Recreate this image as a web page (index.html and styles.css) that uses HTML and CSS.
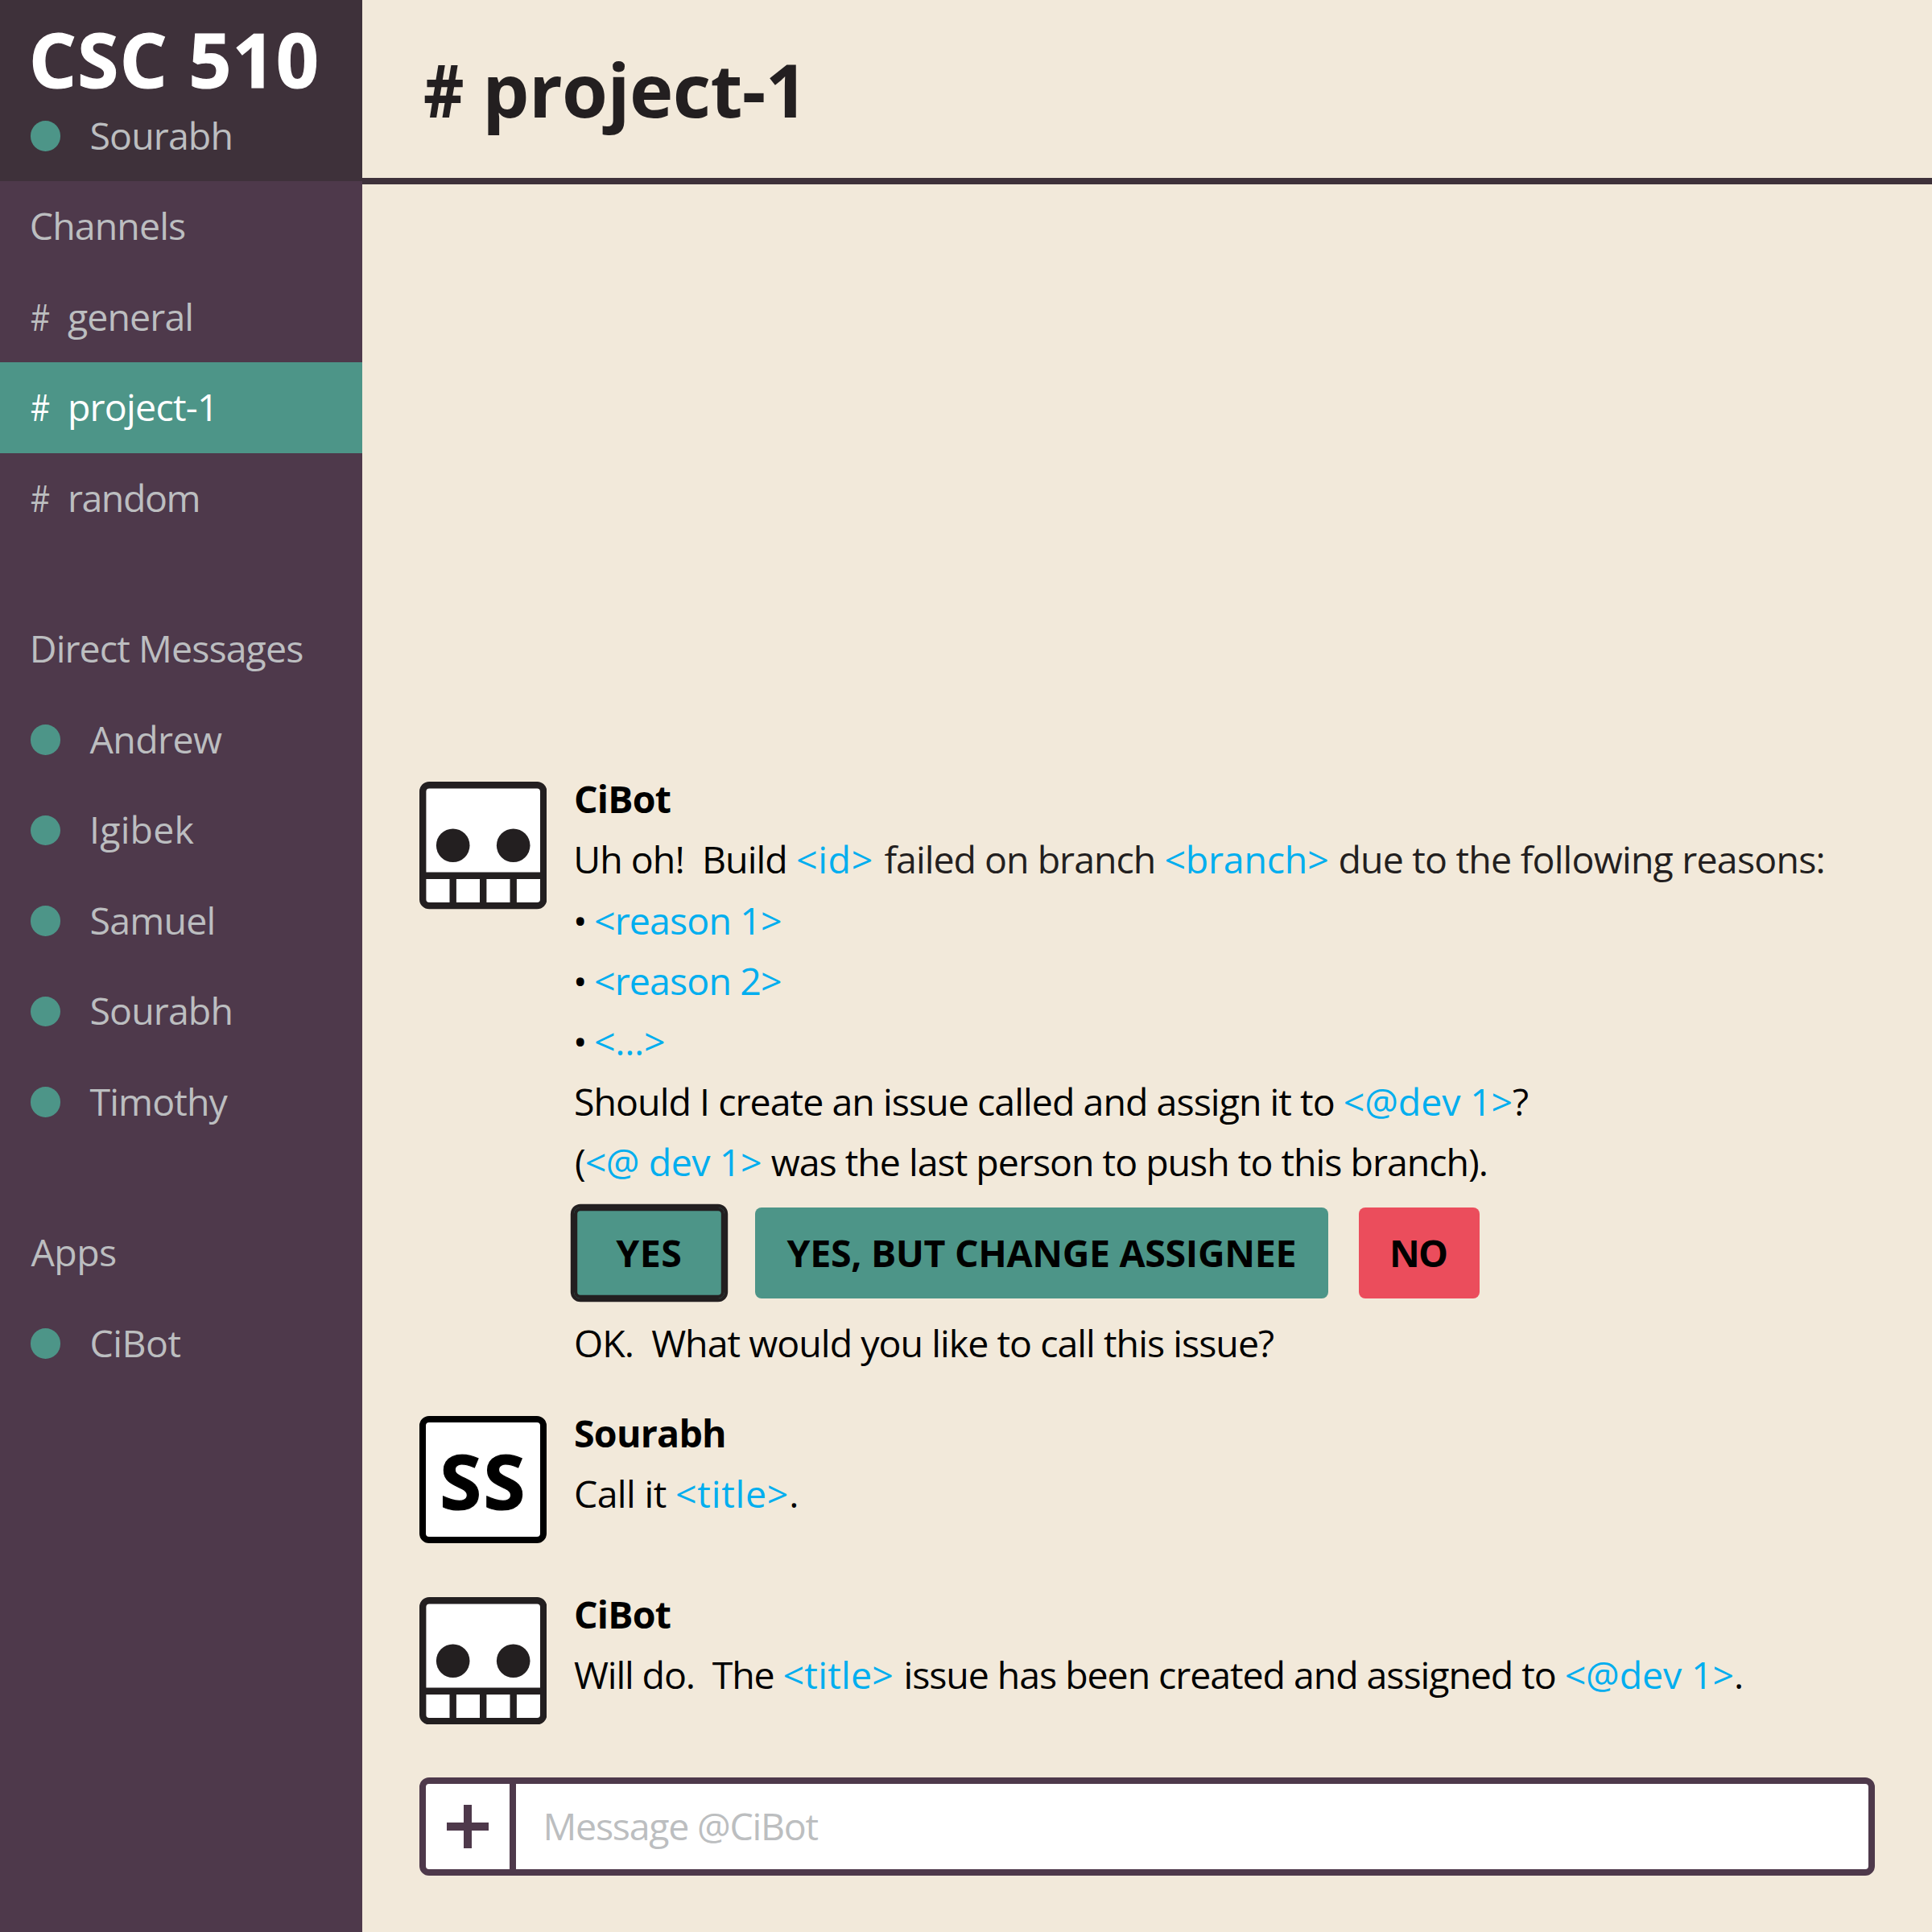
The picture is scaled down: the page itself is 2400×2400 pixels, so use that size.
FILE: index.html
```html
<!DOCTYPE html>
<html lang="en">
<head>
<meta charset="utf-8">
<title>CSC 510 – project-1</title>
<link rel="stylesheet" href="styles.css">
</head>
<body>
<svg width="0" height="0" class="defs">
  <symbol id="bot" viewBox="0 0 158.4 158.4">
    <rect x="4.2" y="4.2" width="150" height="150" rx="8" fill="#fff" stroke="#231f20" stroke-width="8.4"/>
    <circle cx="41.7" cy="79.2" r="20.8" fill="#231f20"/>
    <circle cx="116.7" cy="79.2" r="20.8" fill="#231f20"/>
    <path d="M4.2 116.7h150M41.7 116.7v37.5M79.2 116.7v37.5M116.7 116.7v37.5" fill="none" stroke="#231f20" stroke-width="8.4"/>
  </symbol>
</svg>
<div class="app">
  <aside class="sidebar">
    <header class="workspace">
      <h1 class="workspace-name">CSC 510</h1>
      <div class="row person"><i class="dot"></i><span>Sourabh</span></div>
    </header>
    <nav class="group">
      <div class="row heading channels">Channels</div>
      <div class="row channel"><span class="hash">#</span><span>general</span></div>
      <div class="row channel active"><span class="hash">#</span><span class="sp-project">project-1</span></div>
      <div class="row channel"><span class="hash">#</span><span class="sp-random">random</span></div>
    </nav>
    <nav class="group">
      <div class="row heading">Direct Messages</div>
      <div class="row person"><i class="dot"></i><span class="sp-andrew">Andrew</span></div>
      <div class="row person"><i class="dot"></i><span class="sp-igibek">Igibek</span></div>
      <div class="row person"><i class="dot"></i><span class="sp-samuel">Samuel</span></div>
      <div class="row person"><i class="dot"></i><span>Sourabh</span></div>
      <div class="row person"><i class="dot"></i><span>Timothy</span></div>
    </nav>
    <nav class="group">
      <div class="row heading apps">Apps</div>
      <div class="row person"><i class="dot"></i><span class="sp-cibot">CiBot</span></div>
    </nav>
  </aside>
  <main class="main">
    <header class="topbar"><span class="title-hash">#</span><span class="title">project-1</span></header>
    <section class="feed">
      <article class="message">
        <svg class="avatar"><use href="#bot"/></svg>
        <div class="body">
          <div class="line author">CiBot</div>
          <div class="line build">Uh oh!  Build <b class="var v-id">&lt;id&gt;</b><span class="soft gap"> </span><span class="soft">failed on branch </span><b class="var v-branch">&lt;branch&gt; </b><span class="soft due">due to the following reasons:</span></div>
          <div class="reasons">
            <div class="line"><span class="bullet">• </span><b class="var v-reason">&lt;reason 1&gt;</b></div>
            <div class="line"><span class="bullet">• </span><b class="var v-reason">&lt;reason 2&gt;</b></div>
            <div class="line"><span class="bullet">• </span><b class="var v-more">&lt;...&gt;</b></div>
          </div>
          <div class="line should">Should I create an issue called and assign it to <b class="var v-dev">&lt;@dev 1&gt;</b>?</div>
          <div class="line last">(<b class="var v-at">&lt;@ dev 1&gt; </b>was the last person to push to this branch).</div>
          <div class="actions">
            <button class="btn yes selected">YES</button>
            <button class="btn change">YES, BUT CHANGE ASSIGNEE</button>
            <button class="btn no">NO</button>
          </div>
          <div class="line ok">OK.  What would you like to call this issue?</div>
        </div>
      </article>
      <article class="message">
        <div class="avatar initials">SS</div>
        <div class="body">
          <div class="line author">Sourabh</div>
          <div class="line call">Call it <b class="var v-title">&lt;title&gt;</b>.</div>
        </div>
      </article>
      <article class="message">
        <svg class="avatar"><use href="#bot"/></svg>
        <div class="body">
          <div class="line author">CiBot</div>
          <div class="line will">Will do.  The <b class="var v-title2">&lt;title&gt; </b><span class="issue">issue has been created and assigned to </span><b class="var v-dev">&lt;@dev 1&gt;</b>.</div>
        </div>
      </article>
    </section>
    <div class="composer">
      <div class="add"><svg width="52" height="54" viewBox="0 0 52 54"><path d="M26 0v54M0 27h52" stroke="#4e394b" stroke-width="10" fill="none"/></svg></div>
      <div class="field">Message @CiBot</div>
    </div>
  </main>
</div>
</body>
</html>
```
FILE: styles.css
```css
* { box-sizing: border-box; }

body {
  margin: 0;
  background: #f2e9da;
  color: #000;
  font-family: "Open Sans", "Noto Sans", sans-serif;
  font-size: 46.5px;
  letter-spacing: -0.9px;
}

.defs { position: absolute; }

.app {
  display: grid;
  grid-template-columns: 450.3px 1fr;
  width: 2400px;
  height: 2400px;
  overflow: hidden;
}

/* Sidebar */
.sidebar {
  display: flex;
  flex-direction: column;
  gap: 75px;
  background: #4e394b;
  color: #bcbec0;
}

.workspace {
  height: 225px;
  margin-bottom: -75px;
  background: #3e313a;
}

.workspace-name {
  height: 112.5px;
  margin: 0;
  padding-left: 36px;
  color: #fff;
  font-size: 92.5px;
  font-weight: 700;
  line-height: 147px;
  letter-spacing: 1.4px;
  -webkit-text-stroke: 1.2px #fff;
  white-space: nowrap;
}

.row {
  display: flex;
  height: 112.5px;
  line-height: 110.6px;
  white-space: pre;
}

.heading { padding-left: 36.8px; }
.channels { letter-spacing: -0.9px; }
.apps { padding-left: 38.5px; letter-spacing: -0.6px; }

.channel { padding-left: 37.5px; }
.channel.active { background: #4d9588; color: #fff; }

.hash {
  width: 46.4px;
  transform: scaleX(.8);
  transform-origin: left;
}

.person { padding-left: 37.5px; gap: 36.5px; }

.dot {
  width: 37.5px;
  height: 37.5px;
  margin-top: 37.5px;
  border-radius: 50%;
  background: #4d9588;
}

.sp-project { letter-spacing: -0.75px; }
.sp-random { letter-spacing: -1.45px; }
.sp-andrew { letter-spacing: -0.6px; }
.sp-igibek { letter-spacing: 0.2px; margin-left: -0.5px; }
.sp-samuel { letter-spacing: -0.8px; }
.sp-cibot { letter-spacing: -0.5px; }

/* Conversation */
.main {
  display: flex;
  flex-direction: column;
  min-width: 0;
}

.topbar {
  display: flex;
  flex: none;
  height: 229.3px;
  padding-left: 76px;
  border-bottom: 8.3px solid #3e313a;
  color: #231f20;
  font-size: 92px;
  font-weight: 700;
  line-height: 221px;
  letter-spacing: -0.6px;
}

.title-hash {
  width: 73px;
  transform: scaleX(.85);
  transform-origin: left;
}

.feed {
  display: flex;
  flex: 1;
  flex-direction: column;
  justify-content: flex-end;
  gap: 37px;
  padding-left: 70.5px;
}

.message {
  display: flex;
  gap: 33.8px;
  min-height: 188px;
}

.avatar {
  flex: none;
  width: 158.4px;
  height: 158.4px;
  margin-top: 16px;
}

.initials {
  border: 8.4px solid #000;
  border-radius: 12px;
  background: #fff;
  font-size: 94px;
  font-weight: 700;
  line-height: 145px;
  letter-spacing: 2.6px;
  -webkit-text-stroke: 1.2px #000;
  padding-left: 17.4px;
}

.line {
  height: 75px;
  line-height: 75px;
  white-space: pre;
}

.author { font-weight: 700; letter-spacing: -0.75px; }

.var { color: #00aeef; font-weight: 400; }
.soft { color: #231f20; letter-spacing: -0.99px; }

.build { margin-left: -0.8px; letter-spacing: -0.95px; }
.gap { letter-spacing: 1.4px; }
.due { letter-spacing: -0.8px; }
.reasons { margin-top: 1.3px; }
.bullet { margin-left: -1px; letter-spacing: -1.78px; }
.should { letter-spacing: -0.96px; }
.last { margin-left: 1px; letter-spacing: -1.01px; }
.ok { letter-spacing: -0.97px; }
.call { letter-spacing: -0.63px; }
.will { letter-spacing: -1.13px; }
.issue { letter-spacing: -1.07px; }

.v-id { letter-spacing: 0.66px; }
.v-branch { letter-spacing: -0.21px; }
.v-reason { letter-spacing: -0.87px; }
.v-more { letter-spacing: -0.31px; }
.v-dev { letter-spacing: -0.14px; }
.v-at { letter-spacing: -0.45px; }
.v-title { letter-spacing: 0.75px; }
.v-title2 { letter-spacing: 0.25px; }

.actions {
  display: flex;
  gap: 37.5px;
  margin: 18.7px 0 18px -0.4px;
}

.btn {
  height: 112.5px;
  padding: 0;
  border: 0;
  border-radius: 8px;
  background: #4d9588;
  color: #000;
  font: 700 46.5px/111px "Open Sans", "Noto Sans", sans-serif;
  letter-spacing: -0.33px;
  white-space: nowrap;
}

.yes { width: 187.5px; letter-spacing: 0.47px; }
.change { width: 712.5px; }
.no { width: 150px; background: #eb4d5c; letter-spacing: -1.8px; padding-right: 2px; }

.selected {
  box-shadow: 0 0 0 4.2px #231f20, inset 0 0 0 4.2px #231f20;
}

/* Composer */
.composer {
  display: flex;
  flex: none;
  height: 121.3px;
  margin: 52.8px 70.7px 70.3px 70.5px;
  border: 8.4px solid #4e394b;
  border-radius: 12px;
  background: #fff;
}

.add {
  display: flex;
  width: 112.7px;
  padding: 26px 0 0 26px;
  border-right: 8.4px solid #4e394b;
}

.field {
  padding-left: 33px;
  color: #bcbec0;
  line-height: 104px;
  letter-spacing: -1.25px;
}
```
